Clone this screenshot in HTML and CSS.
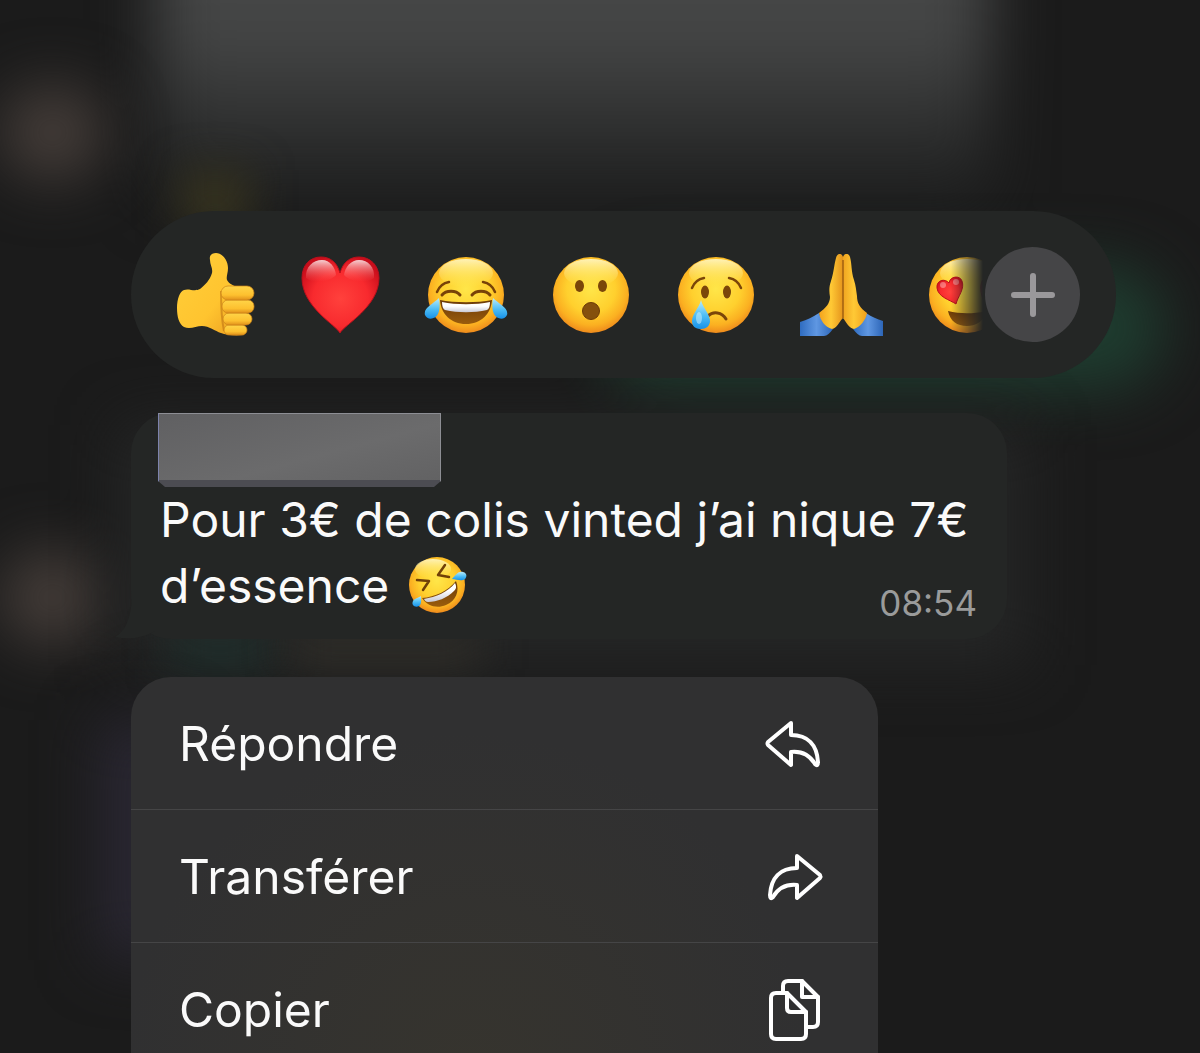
FILE: index.html
```html
<!DOCTYPE html>
<html lang="fr">
  <head>
    <meta charset="utf-8">
    <meta name="viewport" content="width=device-width, initial-scale=1">
    <title>Message</title>
    <link rel="stylesheet" href="styles.css">
  </head>
  <body>
<!-- blurred conversation behind the menu -->
<div class="backdrop" aria-hidden="true">
  <div class="blob blobPanel"></div>
  <div class="blob blobAvatar"></div>
  <div class="blob blobAvatar blobAvatarLow"></div>
  <div class="blob blobOlive"></div>
  <div class="blob blobGreen"></div>
  <div class="blob blobHalo"></div>
  <div class="blob blobTeal"></div>
  <div class="blob blobBrown"></div>
  <div class="blob blobViolet"></div>
</div>

<!-- gradients shared by the emojis -->
<svg class="defs" width="0" height="0" aria-hidden="true">
  <defs>
    <radialGradient id="face" cx="50%" cy="42%" r="58%">
      <stop offset="0" stop-color="#ffe649"/>
      <stop offset="0.55" stop-color="#ffd02e"/>
      <stop offset="0.82" stop-color="#fbb021"/>
      <stop offset="1" stop-color="#ee8a1c"/>
    </radialGradient>
    <linearGradient id="shine" x1="0" y1="0" x2="0" y2="1">
      <stop offset="0" stop-color="#fffbd0" stop-opacity="0.85"/>
      <stop offset="1" stop-color="#ffec60" stop-opacity="0"/>
    </linearGradient>
    <linearGradient id="tear" x1="0" y1="0" x2="0" y2="1">
      <stop offset="0" stop-color="#b9ecfb"/>
      <stop offset="0.55" stop-color="#4cbcf5"/>
      <stop offset="1" stop-color="#1791e8"/>
    </linearGradient>
    <linearGradient id="mouth" x1="0" y1="0" x2="0" y2="1">
      <stop offset="0" stop-color="#6b3a08"/>
      <stop offset="1" stop-color="#9a5c0c"/>
    </linearGradient>
    <linearGradient id="teeth" x1="0" y1="0" x2="0" y2="1">
      <stop offset="0.4" stop-color="#ffffff"/>
      <stop offset="1" stop-color="#c9c9d4"/>
    </linearGradient>
    <radialGradient id="heart" cx="50%" cy="55%" r="60%">
      <stop offset="0" stop-color="#ff413c"/>
      <stop offset="0.6" stop-color="#f82a2e"/>
      <stop offset="1" stop-color="#c90d1b"/>
    </radialGradient>
    <linearGradient id="heartShine" x1="0" y1="0" x2="0" y2="1">
      <stop offset="0" stop-color="#ffffff" stop-opacity="0.8"/>
      <stop offset="1" stop-color="#ff6a66" stop-opacity="0"/>
    </linearGradient>
    <linearGradient id="skin" x1="0" y1="0" x2="1" y2="1">
      <stop offset="0" stop-color="#ffcf3a"/>
      <stop offset="0.6" stop-color="#ffc42f"/>
      <stop offset="1" stop-color="#e99a1e"/>
    </linearGradient>
    <linearGradient id="finger" x1="0" y1="0" x2="0" y2="1">
      <stop offset="0" stop-color="#ffd548"/>
      <stop offset="0.65" stop-color="#fdc02f"/>
      <stop offset="1" stop-color="#e0901b"/>
    </linearGradient>
    <linearGradient id="palmLeft" x1="0" y1="0" x2="1" y2="0">
      <stop offset="0" stop-color="#f3a21d"/>
      <stop offset="0.5" stop-color="#ffc935"/>
      <stop offset="1" stop-color="#e5941c"/>
    </linearGradient>
    <linearGradient id="palmRight" x1="0" y1="0" x2="1" y2="0">
      <stop offset="0" stop-color="#f0a420"/>
      <stop offset="0.45" stop-color="#ffc935"/>
      <stop offset="1" stop-color="#f0a01d"/>
    </linearGradient>
    <linearGradient id="sleeve" x1="0" y1="0" x2="1" y2="0">
      <stop offset="0" stop-color="#2f6cc0"/>
      <stop offset="0.5" stop-color="#5f97e2"/>
      <stop offset="1" stop-color="#2d66b8"/>
    </linearGradient>
  </defs>
</svg>

<main class="overlay">
  <div class="reactions">
    <div class="emojiList">
      <button class="emoji" aria-label="Pouce levé">
        <svg viewBox="0 0 84 84">
          <path fill="url(#skin)" d="M36 7C35 2 38 0 42 0C48 0 54 7 54 15C54 20 52 24 53 27C55 31 59 32 63 34L70 82C60 83 52 82 47 80C41 78 35 73 28 73C22 73 16 77 10 74C5 71 3 64 3 55C3 46 6 38 10 37C15 35 20 39 26 36C31 32 36 27 38 20C39 15 36 12 36 7Z"/>
          <path fill="none" stroke="#b97012" stroke-width="2" opacity="0.55" d="M47 38C47 50 47 64 50 78"/>
          <rect fill="url(#finger)" stroke="#cb8319" stroke-width="0.7" x="50" y="72" width="23" height="10" rx="5"/>
          <rect fill="url(#finger)" stroke="#cb8319" stroke-width="0.7" x="49" y="60" width="29" height="12" rx="6"/>
          <rect fill="url(#finger)" stroke="#cb8319" stroke-width="0.7" x="48" y="47" width="32" height="13" rx="6"/>
          <rect fill="url(#finger)" stroke="#cb8319" stroke-width="0.7" x="47" y="33" width="33" height="14" rx="7"/>
        </svg>
      </button>
      <button class="emoji" aria-label="Cœur">
        <svg viewBox="0 0 84 84">
          <path fill="url(#heart)" stroke="#bb101c" stroke-width="1" d="M41 80C37 72 3 54 3 25C3 12 11 4 22 4C31 4 38 9 41 20C44 9 51 4 60 4C71 4 80 12 80 25C80 54 45 72 41 80Z"/>
          <path fill="url(#heartShine)" d="M7 25C6 14 14 7 23 7C31 7 36 14 37 22C31 29 14 31 7 25Z"/>
          <path fill="url(#heartShine)" d="M45 22C46 14 52 7 60 7C69 7 76 14 75 25C68 31 51 29 45 22Z"/>
        </svg>
      </button>
      <button class="emoji" aria-label="Larmes de joie">
        <svg viewBox="0 0 84 84">
          <circle fill="url(#face)" cx="42" cy="42" r="38"/>
          <ellipse fill="url(#shine)" cx="42" cy="20" rx="27" ry="14"/>
          <g fill="none" stroke="#784208" stroke-width="3" stroke-linecap="round">
            <path stroke-width="2.500" d="M13 39C15 34 19 30 25 29"/>
            <path stroke-width="2.500" d="M71 39C69 34 65 30 59 29"/>
            <path d="M18 42C22 37 32 37 36 42"/>
            <path d="M48 42C52 37 62 37 66 42"/>
          </g>
          <path fill="url(#mouth)" d="M16 47C30 50 54 50 68 47C67 61 57 71 42 71C27 71 17 61 16 47Z"/>
          <path fill="url(#teeth)" d="M18 49C32 52 52 52 66 49C66 53 65 56 63 57C50 60 34 60 21 57C19 56 18 53 18 49Z"/>
          <path fill="url(#tear)" d="M15 45C16 51 16 57 14 61C11 67 3 67 1 62C-1 55 9 51 15 45Z"/>
          <path fill="url(#tear)" d="M69 45C68 51 68 57 70 61C73 67 81 67 83 62C85 55 75 51 69 45Z"/>
        </svg>
      </button>
      <button class="emoji" aria-label="Surpris">
        <svg viewBox="0 0 84 84">
          <circle fill="url(#face)" cx="42" cy="42" r="38"/>
          <ellipse fill="url(#shine)" cx="42" cy="20" rx="27" ry="14"/>
          <ellipse fill="#7b4609" cx="30.500" cy="33" rx="4.500" ry="6"/>
          <ellipse fill="#7b4609" cx="53.500" cy="33" rx="4.500" ry="6"/>
          <circle fill="#85500d" stroke="#6d3b06" cx="42" cy="58" r="8.500"/>
        </svg>
      </button>
      <button class="emoji" aria-label="Triste">
        <svg viewBox="0 0 84 84">
          <circle fill="url(#face)" cx="42" cy="42" r="38"/>
          <ellipse fill="url(#shine)" cx="42" cy="20" rx="27" ry="14"/>
          <ellipse fill="#7b4609" cx="31" cy="39" rx="4" ry="6.500"/>
          <ellipse fill="#7b4609" cx="53" cy="39" rx="4" ry="6.500"/>
          <g fill="none" stroke="#7b4609" stroke-width="2.500" stroke-linecap="round">
            <path d="M18 35C20 30 24 26 30 25"/>
            <path d="M67 35C65 30 61 26 55 25"/>
            <path stroke-width="3" d="M34 63C39 58 48 59 52 66"/>
          </g>
          <path fill="url(#tear)" d="M27 47C29 55 36 61 36 68C36 73 32 76 27 76C21 76 18 73 18 68C18 61 25 55 27 47Z"/>
          <ellipse fill="#d4f4ff" opacity="0.5" cx="25" cy="65" rx="3" ry="6"/>
        </svg>
      </button>
      <button class="emoji" aria-label="Mains jointes">
        <svg viewBox="0 0 84 84">
          <path fill="url(#sleeve)" d="M1 69C8 67 14 64 20 60C22 67 27 73 34 76C31 80 28 83 25 83H1Z"/>
          <path fill="url(#sleeve)" d="M84 68C78 66 73 64 67 60C65 67 60 73 54 76C57 80 60 83 63 83H84Z"/>
          <path fill="url(#palmLeft)" d="M44 65C40 69 38 75 33 76C26 74 21 67 20 60C27 55 31 50 31 44C30 38 30 34 32 28C35 19 35 12 37 5C38 0 43 0 44 4Z"/>
          <path fill="url(#palmRight)" d="M44 65C47 69 50 75 55 76C61 74 67 67 68 60C61 55 58 50 58 43C57 37 57 33 55 27C52 18 53 11 51 4C50 0 45 0 44 4Z"/>
          <path fill="none" stroke="#a05f10" stroke-width="1.500" d="M44 7V65"/>
        </svg>
      </button>
      <button class="emoji" aria-label="Yeux en cœur">
        <svg viewBox="0 0 84 84">
          <circle fill="url(#face)" cx="43" cy="42" r="38"/>
          <ellipse fill="url(#shine)" cx="43" cy="20" rx="27" ry="14"/>
          <path fill="url(#mouth)" d="M24 58C36 61 50 61 62 58C60 68 53 73 43 73C33 73 26 68 24 58Z"/>
          <path fill="url(#heart)" stroke="#bb101c" stroke-width="1" d="M32 51C26 47 14 44 13 35C12 27 21 25 25 30C26 23 36 22 38 28C41 36 34 43 32 51Z"/>
          <path fill="url(#heart)" stroke="#bb101c" stroke-width="1" d="M60 50C66 47 76 44 77 35C78 28 69 25 66 31C65 24 60 24 58 28C55 36 58 43 60 50Z"/>
          <ellipse fill="#ffffff" opacity="0.35" cx="19" cy="32" rx="3" ry="3"/>
          <ellipse fill="#ffffff" opacity="0.35" cx="32" cy="29" rx="3" ry="3"/>
        </svg>
      </button>
    </div>
    <button class="more" aria-label="Plus de réactions">
      <svg viewBox="0 0 44 44"><path d="M22 3V41M3 22H41"/></svg>
    </button>
  </div>

  <article class="bubble">
    <svg class="tail" viewBox="0 0 40 48" aria-hidden="true"><path d="M17 0C17 22 13 38 0 46C14 49 28 47 40 40V0Z"/></svg>
    <div class="sender"></div>
    <p class="message">Pour 3€ de colis vinted j’ai nique 7€ d’essence
      <svg class="inlineEmoji" viewBox="0 0 60 60" role="img" aria-label="Mort de rire">
        <circle fill="url(#face)" cx="30" cy="30" r="28"/>
        <ellipse fill="url(#shine)" cx="26" cy="14" rx="18" ry="10"/>
        <g fill="none" stroke="#704008" stroke-width="2.500" stroke-linecap="round" stroke-linejoin="round">
          <path d="M10 25L22 26L16 35"/>
          <path d="M38 10L31 20L42 22"/>
        </g>
        <path fill="url(#mouth)" d="M15 43C28 42 41 36 49 26C53 36 49 46 39 50C30 54 20 51 15 43Z"/>
        <path fill="url(#teeth)" d="M17 44C29 42 41 37 48 28C50 32 49 34 47 36C40 43 30 47 21 47C19 47 18 46 17 44Z"/>
        <path fill="url(#tear)" d="M45 24C49 20 51 16 56 17C61 18 60 24 56 25C52 26 49 24 45 24Z"/>
        <path fill="url(#tear)" d="M14 41C14 45 15 49 12 51C8 53 4 50 6 46C8 43 11 43 14 41Z"/>
      </svg>
      <time class="time" datetime="08:54">08:54</time>
    </p>
  </article>

  <div class="menu">
    <button class="menuItem">
      <span>Répondre</span>
      <svg class="icon" viewBox="0 0 64 64"><path d="M29 12L6 31Q5 32.500 6 34L29 54V41C39 40 47 43 53 53Q56 56 56 51C55 34 46 24 29 24Z"/></svg>
    </button>
    <button class="menuItem">
      <span>Transférer</span>
      <svg class="icon" viewBox="0 0 64 64"><path d="M35 12L58 31Q59 32.500 58 34L35 54V41C25 40 17 43 11 53Q8 56 8 51C9 34 18 24 35 24Z"/></svg>
    </button>
    <button class="menuItem">
      <span>Copier</span>
      <svg class="icon" viewBox="0 0 64 64">
        <path d="M14 16H25L44 35V57Q44 62 39 62H14Q9 62 9 57V21Q9 16 14 16Z"/>
        <path d="M25 16V31Q25 35 29 35H44"/>
        <path d="M21 16V9Q21 4 26 4H40L56 20V45Q56 50 51 50H44"/>
        <path d="M40 4V20H56"/>
      </svg>
    </button>
  </div>
</main>
  </body>
</html>
```
FILE: styles.css
```css
* {
  box-sizing: border-box;
  margin: 0px;
  padding: 0px;
}
:root {
  --pageBG: #1b1b1b;
  --bubbleBG: #242625;
  --menuBG: #303031;
  --line: #454546;
  --text: #fafafa;
  --timeText: #9a9b9b;
}
body {
  background-color: var(--pageBG);
  color: var(--text);
  font-family: Inter, 'Liberation Sans', sans-serif;
  font-size: 48px;
  overflow: hidden;
}
button {
  border: none;
  background: none;
  color: inherit;
  font: inherit;
  cursor: pointer;
}
svg {
  display: block;
}
.defs {
  position: absolute;
}

/* backdrop */
.backdrop {
  position: fixed;
  inset: 0;
  overflow: hidden;
}
.blob {
  position: absolute;
  filter: blur(30px);
}
.blobPanel {
  left: 155px;
  right: 210px;
  top: -120px;
  height: 320px;
  background: linear-gradient(#454646 48%, #303131 75%, #1e1f1f);
}
.blobAvatar {
  left: 0px;
  top: 85px;
  width: 105px;
  height: 95px;
  border-radius: 50%;
  background-color: #463e3a;
}
.blobAvatarLow {
  top: 550px;
}
.blobOlive {
  left: 180px;
  top: 170px;
  width: 70px;
  height: 60px;
  background-color: #35321f;
  filter: blur(20px);
}
.blobGreen {
  left: 600px;
  right: 35px;
  top: 265px;
  height: 125px;
  border-radius: 60px;
  background-color: #1e3c2f;
}
.blobTeal {
  left: 170px;
  top: 630px;
  width: 100px;
  height: 40px;
  background-color: #1f2f2c;
  filter: blur(20px);
}
.blobBrown {
  left: 290px;
  top: 630px;
  width: 190px;
  height: 40px;
  background-color: #2f2d28;
  filter: blur(20px);
}
.blobHalo {
  left: 120px;
  right: 175px;
  top: 425px;
  height: 240px;
  background-color: #252626;
}
.blobViolet {
  left: 100px;
  top: 720px;
  width: 80px;
  height: 240px;
  background-color: #2a2733;
}

/* foreground */
.overlay {
  position: relative;
  height: 100vh;
  padding: 211px 84px 0px 131px;
  overflow: hidden;
}
.reactions {
  display: flex;
  align-items: center;
  height: 167px;
  padding: 0px 36px 0px 43px;
  border-radius: 83px;
  background-color: var(--bubbleBG);
}
.emojiList {
  display: flex;
  flex: 1;
  gap: 41px;
  min-width: 0px;
  overflow: hidden;
  mask-image: linear-gradient(to left, transparent 2px, black 34px);
}
.emoji {
  flex: none;
  width: 84px;
  height: 84px;
}
.more {
  display: flex;
  flex: none;
  align-items: center;
  justify-content: center;
  width: 95px;
  height: 95px;
  border-radius: 50%;
  background-color: #454547;
}
.more svg {
  width: 44px;
  fill: none;
  stroke: #9a989b;
  stroke-width: 6;
  stroke-linecap: round;
}
.bubble {
  position: relative;
  max-width: 876px;
  margin-top: 35px;
  padding: 0px 30px 20px 27px;
  border-radius: 40px;
  background-color: var(--bubbleBG);
}
.tail {
  position: absolute;
  left: -16px;
  bottom: 0px;
  width: 40px;
  height: 48px;
  fill: var(--bubbleBG);
}
.sender {
  width: 283px;
  height: 74px;
  border: 1px solid #8d8e94;
  border-left-color: #7d83ad;
  border-bottom: 7px solid #4c4c52;
  background: linear-gradient(165deg, #606062, #6b6b6c 60%, #626263);
  clip-path: polygon(0 0, 100% 0, 100% 68px, 276px 100%, 7px 100%, 0 68px);
}
.message {
  padding-left: 2px;
  line-height: 66px;
}
.inlineEmoji {
  display: inline-block;
  width: 60px;
  height: 60px;
  margin-left: 4px;
  vertical-align: -12px;
}
/* sits on the last line of the text, a little lower */
.time {
  float: right;
  margin-top: 30px;
  color: var(--timeText);
  font-size: 35px;
  line-height: 40px;
}
.menu {
  max-width: 747px;
  margin-top: 38px;
  border-radius: 40px 40px 0px 0px;
  background: radial-gradient(circle at 45% 100%, #36342e, var(--menuBG) 60%);
  overflow: hidden;
}
.menuItem {
  display: flex;
  align-items: center;
  justify-content: space-between;
  width: 100%;
  height: 133px;
  padding: 0px 52px 0px 48px;
  border-bottom: 1px solid var(--line);
}
.icon {
  width: 64px;
  height: 64px;
  fill: none;
  stroke: white;
  stroke-width: 4;
  stroke-linecap: round;
  stroke-linejoin: round;
}
```
